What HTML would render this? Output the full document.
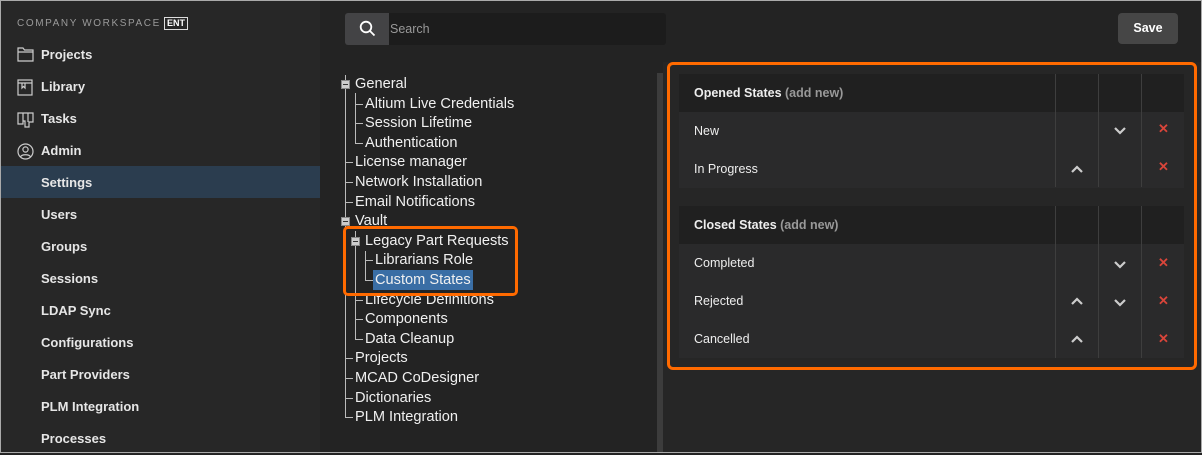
<!DOCTYPE html>
<html><head><meta charset="utf-8"><style>
*{margin:0;padding:0;box-sizing:border-box}
body{width:1202px;height:453px;background:#232323;font-family:"Liberation Sans",sans-serif;position:relative;overflow:hidden}
.a{position:absolute}
.w{position:absolute;left:0;top:1px;width:1202px;height:453px}
.sb{left:0;top:-1px;width:320px;height:454px;background:#272727}
.ni{position:absolute;left:41px;font-size:13px;font-weight:bold;color:#e6e6e6;height:32px;line-height:32px}
.ic{position:absolute;left:17px}
.t{position:absolute;font-size:14.6px;color:#f0f0f0;height:20px;line-height:20px;white-space:nowrap}
.vl{position:absolute;width:1px;background:#bbb}
.hl{position:absolute;height:1px;background:#bbb}
.bx{position:absolute;width:9px;height:9px;background:#ccc;border:1px solid #888}
.bx:after{content:"";position:absolute;left:1px;top:3px;width:5px;height:1px;background:#333}
.row{position:absolute;left:679px;width:505px;height:38px;line-height:38px;font-size:12.5px;color:#eee;padding-left:15px}
.hd{background:#202020;font-weight:bold}
.bd{background:#2a2a2b}
.cl{position:absolute;width:1px;background:#3e3e3e}
.x{position:absolute;color:#d9453a;font-size:13px;font-weight:bold}
</style></head><body>
<div class="w">
<div class="a sb"></div>
<div class="a" style="left:17px;top:17px;font-size:10px;letter-spacing:1.6px;color:#9a9a9a">COMPANY WORKSPACE</div>
<div class="a" style="left:164px;top:16px;border:1px solid #ddd;font-size:9px;font-weight:bold;color:#fff;padding:0 2px;line-height:11px">ENT</div>
<svg class="ic" style="top:46px" width="17" height="15" viewBox="0 0 17 15" fill="none" stroke="#ccc" stroke-width="1.2"><path d="M1 1h5l1.5 2H16v11H1z M1 5h15"/></svg>
<svg class="ic" style="top:78px" width="16" height="17" viewBox="0 0 16 17" fill="none" stroke="#ccc" stroke-width="1.2"><rect x="1" y="1" width="14" height="15"/><path d="M1 4h14 M5 4v5l1.5-1.5L8 9V4"/></svg>
<svg class="ic" style="top:111px" width="17" height="16" viewBox="0 0 17 16" fill="none" stroke="#ccc" stroke-width="1.2"><path d="M1 1h15v9h-4v5H8V9H6v3H1z M6 1v8 M11 1v9"/></svg>
<svg class="ic" style="top:142px" width="17" height="17" viewBox="0 0 17 17" fill="none" stroke="#ccc" stroke-width="1.2"><circle cx="8.5" cy="8.5" r="7.5"/><circle cx="8.5" cy="6.5" r="2.6"/><path d="M3.5 14c1-3 9-3 10 0"/></svg>
<div class="ni" style="top:38px">Projects</div>
<div class="ni" style="top:70px">Library</div>
<div class="ni" style="top:102px">Tasks</div>
<div class="ni" style="top:134px">Admin</div>
<div class="a" style="left:0;top:165px;width:320px;height:32px;background:#2b3d4f"></div>
<div class="ni" style="top:166px">Settings</div>
<div class="ni" style="top:198px">Users</div>
<div class="ni" style="top:230px">Groups</div>
<div class="ni" style="top:262px">Sessions</div>
<div class="ni" style="top:294px">LDAP Sync</div>
<div class="ni" style="top:326px">Configurations</div>
<div class="ni" style="top:358px">Part Providers</div>
<div class="ni" style="top:390px">PLM Integration</div>
<div class="ni" style="top:422px">Processes</div>

<div class="vl" style="left:345px;top:74px;height:343px"></div>
<div class="vl" style="left:355px;top:92px;height:51px"></div>
<div class="vl" style="left:355px;top:230px;height:109px"></div>
<div class="vl" style="left:365px;top:250px;height:30px"></div>
<div class="hl" style="left:355px;top:103px;width:8px"></div>
<div class="hl" style="left:355px;top:122px;width:8px"></div>
<div class="hl" style="left:355px;top:142px;width:8px"></div>
<div class="hl" style="left:345px;top:161px;width:8px"></div>
<div class="hl" style="left:345px;top:181px;width:8px"></div>
<div class="hl" style="left:345px;top:201px;width:8px"></div>
<div class="hl" style="left:365px;top:259px;width:8px"></div>
<div class="hl" style="left:365px;top:279px;width:8px"></div>
<div class="hl" style="left:355px;top:299px;width:8px"></div>
<div class="hl" style="left:355px;top:318px;width:8px"></div>
<div class="hl" style="left:355px;top:338px;width:8px"></div>
<div class="hl" style="left:345px;top:357px;width:8px"></div>
<div class="hl" style="left:345px;top:377px;width:8px"></div>
<div class="hl" style="left:345px;top:397px;width:8px"></div>
<div class="hl" style="left:345px;top:416px;width:8px"></div>
<div class="bx" style="left:341px;top:79px"></div>
<div class="bx" style="left:341px;top:216px"></div>
<div class="bx" style="left:351px;top:236px"></div>
<div class="t" style="left:355px;top:73px">General</div>
<div class="t" style="left:365px;top:93px">Altium Live Credentials</div>
<div class="t" style="left:365px;top:112px">Session Lifetime</div>
<div class="t" style="left:365px;top:132px">Authentication</div>
<div class="t" style="left:355px;top:151px">License manager</div>
<div class="t" style="left:355px;top:171px">Network Installation</div>
<div class="t" style="left:355px;top:191px">Email Notifications</div>
<div class="t" style="left:355px;top:210px">Vault</div>
<div class="t" style="left:365px;top:230px">Legacy Part Requests</div>
<div class="t" style="left:375px;top:249px">Librarians Role</div>
<div class="t" style="left:373px;top:269px;background:#3a6ea5;padding:0 2px">Custom States</div>
<div class="t" style="left:365px;top:289px">Lifecycle Definitions</div>
<div class="t" style="left:365px;top:308px">Components</div>
<div class="t" style="left:365px;top:328px">Data Cleanup</div>
<div class="t" style="left:355px;top:347px">Projects</div>
<div class="t" style="left:355px;top:367px">MCAD CoDesigner</div>
<div class="t" style="left:355px;top:387px">Dictionaries</div>
<div class="t" style="left:355px;top:406px">PLM Integration</div>
<div class="a" style="left:343px;top:225px;width:175px;height:70px;border:3px solid #ff6a00;border-radius:5px"></div>
</div>

<div class="a" style="left:345px;top:13px;width:44px;height:32px;background:#434345;border-radius:3px 0 0 3px"></div>
<svg class="a" style="left:359px;top:20px" width="17" height="17" viewBox="0 0 17 17" fill="none" stroke="#fff" stroke-width="1.8"><circle cx="7" cy="7" r="5.3"/><path d="M11 11l4.5 4.5"/></svg>
<div class="a" style="left:389px;top:13px;width:277px;height:32px;background:#1c1c1c;border-radius:0 3px 3px 0;color:#999;font-size:12.5px;line-height:32px;padding-left:1px">Search</div>
<div class="a" style="left:1118px;top:13px;width:60px;height:31px;background:#464646;border-radius:4px;color:#fff;font-weight:bold;font-size:12.5px;line-height:31px;text-align:center">Save</div>

<div class="a" style="left:657px;top:73px;width:6px;height:380px;background:#3c3c3c"></div>
<div class="a" style="left:663px;top:62px;width:539px;height:391px;background:#262626"></div>

<div class="row hd" style="top:74px">Opened States <span style="color:#999">(add new)</span></div>
<div class="row bd" style="top:112px">New</div>
<div class="row bd" style="top:150px">In Progress</div>
<div class="row hd" style="top:206px">Closed States <span style="color:#999">(add new)</span></div>
<div class="row bd" style="top:244px">Completed</div>
<div class="row bd" style="top:282px">Rejected</div>
<div class="row bd" style="top:320px">Cancelled</div>
<div class="cl" style="left:1055px;top:74px;height:113px"></div>
<div class="cl" style="left:1098px;top:74px;height:113px"></div>
<div class="cl" style="left:1141px;top:74px;height:113px"></div>
<div class="cl" style="left:1055px;top:206px;height:152px"></div>
<div class="cl" style="left:1098px;top:206px;height:152px"></div>
<div class="cl" style="left:1141px;top:206px;height:152px"></div>
<svg class="a" style="left:0;top:0" width="1202" height="453" fill="none" stroke="#ccc" stroke-width="2.2">
<path d="M1115 128l5 5 5-5 M1115 262l5 5 5-5 M1115 300l5 5 5-5"/>
<path d="M1072 172l5-5 5 5 M1072 304l5-5 5 5 M1072 342l5-5 5 5"/>
</svg>
<div class="x" style="left:1158px;top:121px">✕</div>
<div class="x" style="left:1158px;top:159px">✕</div>
<div class="x" style="left:1158px;top:255px">✕</div>
<div class="x" style="left:1158px;top:293px">✕</div>
<div class="x" style="left:1158px;top:331px">✕</div>
<div class="a" style="left:667px;top:62px;width:530px;height:308px;border:3px solid #ff6a00;border-radius:6px"></div>
<div class="a" style="left:0;top:0;width:1202px;height:453px;border:1px solid #aaa"></div>
</body></html>
